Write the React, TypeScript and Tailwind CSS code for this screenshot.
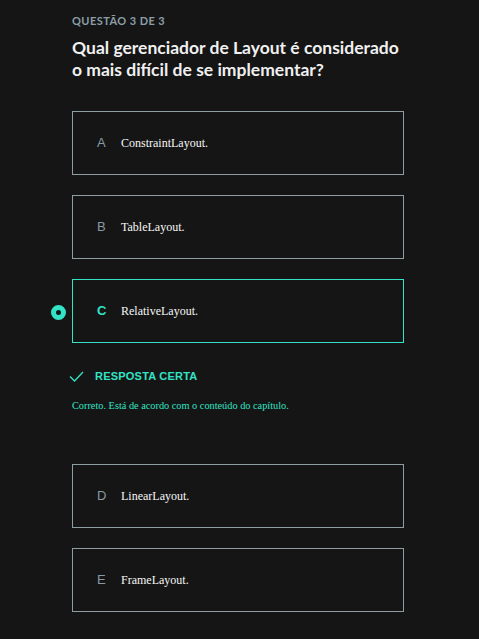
const options = [
	{ letter: "A", text: "ConstraintLayout." },
	{ letter: "B", text: "TableLayout." },
	{ letter: "C", text: "RelativeLayout.", selected: true },
]

const rest = [
	{ letter: "D", text: "LinearLayout." },
	{ letter: "E", text: "FrameLayout." },
]

function Option({ letter, text, selected }: { letter: string; text: string; selected?: boolean }) {
	return (
		<div
			className={
				"relative flex h-[64px] items-center border pl-[24px] " +
				(selected ? "border-[#33e3c5]" : "border-[#8e9ca4]")
			}
		>
			{selected && (
				<span className="absolute -left-[22px] top-[25px] h-[15px] w-[15px] rounded-full border-[5px] border-[#33e3c5]" />
			)}
			<span
				className={
					"w-[24px] text-[13px] font-['Liberation_Sans',sans-serif] " +
					(selected ? "font-bold text-[#33e3c5]" : "text-[#8a9aa3]")
				}
			>
				{letter}
			</span>
			<span className="text-[12px] text-[#f7f7f7] font-['Liberation_Serif',serif]">{text}</span>
		</div>
	)
}

export default function App() {
	return (
		<div className="min-h-[639px] w-full bg-[#151515] pt-[14px] pl-[72px] font-['Lato',sans-serif]">
			<div className="w-[332px]">
				<p className="text-[11px] leading-[14px] font-bold tracking-[0.04em] text-[#8b9ea8]">
					QUESTÃO 3 DE 3
				</p>
				<h1 className="mt-[9px] whitespace-nowrap text-[17.5px] leading-[22px] font-bold text-[#f0f0f0]">
					Qual gerenciador de Layout é considerado
					<br />o mais difícil de se implementar?
				</h1>

				<div className="mt-[30px] flex flex-col gap-[20px]">
					{options.map((o) => (
						<Option key={o.letter} {...o} />
					))}
				</div>

				<div className="mt-[26px] flex h-[14px] items-center gap-[11px]">
					<svg className="-ml-[3px]" width="15" height="11" viewBox="0 0 15 11" fill="none">
						<path d="M1 5.5L5.5 10L14 1" stroke="#33e3c5" strokeWidth="1.3" />
					</svg>
					<span className="text-[11px] font-bold tracking-[0.02em] text-[#33e3c5] font-['Liberation_Sans',sans-serif]">
						RESPOSTA CERTA
					</span>
				</div>
				<p className="mt-[16px] text-[10.3px] leading-[14px] text-[#33e3c5] font-['Liberation_Serif',serif]">
					Correto. Está de acordo com o conteúdo do capítulo.
				</p>

				<div className="mt-[51px] flex flex-col gap-[20px]">
					{rest.map((o) => (
						<Option key={o.letter} {...o} />
					))}
				</div>
			</div>
		</div>
	)
}
